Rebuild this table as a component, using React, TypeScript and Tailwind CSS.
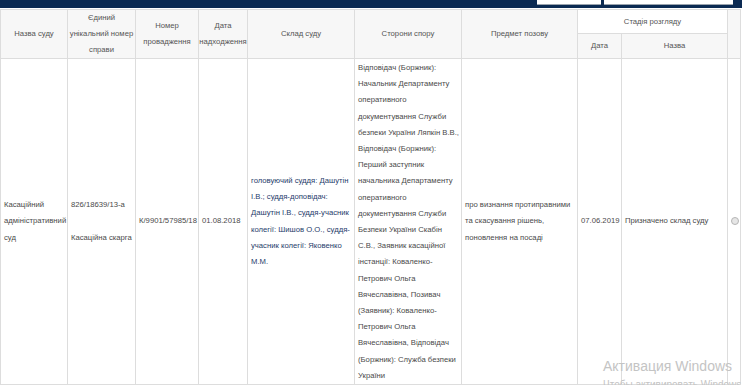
const headCell = "border border-[#dddddd] bg-[#f7f7f7] text-center align-middle font-normal px-0 py-0 leading-[16px] whitespace-nowrap";
const bodyCell = "border border-[#dddddd] align-middle px-[3px] py-0 text-left font-normal";

const parties = [
  "Відповідач (Боржник):",
  "Начальник Департаменту",
  "оперативного",
  "документування Служби",
  "безпеки України Ляпкін В.В.,",
  "Відповідач (Боржник):",
  "Перший заступник",
  "начальника Департаменту",
  "оперативного",
  "документування Служби",
  "Безпеки України Скабін",
  "С.В., Заявник касаційної",
  "інстанції: Коваленко-",
  "Петрович Ольга",
  "Вячеславівна, Позивач",
  "(Заявник): Коваленко-",
  "Петрович Ольга",
  "Вячеславівна, Відповідач",
  "(Боржник): Служба безпеки",
  "України",
];

const judges = [
  "головуючий суддя: Дашутін",
  "І.В.; суддя-доповідач:",
  "Дашутін І.В., суддя-учасник",
  "колегії: Шишов О.О., суддя-",
  "учасник колегії: Яковенко",
  "М.М.",
];

const Lines = ({ items }: { items: string[] }) => (
  <>
    {items.map((t, i) => (
      <span key={i} className="block whitespace-nowrap">
        {t}
      </span>
    ))}
  </>
);

const App = () => {
  return (
    <div className="relative w-[742px] h-[385px] overflow-hidden bg-white font-['Liberation_Sans',Arial,sans-serif] text-[7.7px] text-[#555555]">
      <div className="h-[8px] bg-[#0b2a52] flex justify-end items-start pr-[9px] gap-[3px]">
        <div className="w-[64px] h-[5px] bg-white border-b border-[#9aa3ad]" />
        <div className="w-[129px] h-[5px] bg-white border-b border-[#9aa3ad]" />
      </div>
      <div className="h-[1px] bg-white" />

      <table className="w-[740px] table-fixed border-collapse">
        <colgroup>
          <col className="w-[67px]" />
          <col className="w-[68px]" />
          <col className="w-[63px]" />
          <col className="w-[49px]" />
          <col className="w-[107px]" />
          <col className="w-[107px]" />
          <col className="w-[116px]" />
          <col className="w-[44px]" />
          <col className="w-[106px]" />
          <col className="w-[13px]" />
        </colgroup>
        <thead>
          <tr className="h-[24px]">
            <th rowSpan={2} className={headCell}>Назва суду</th>
            <th rowSpan={2} className={headCell}>
              Єдиний
              <br />
              унікальний номер
              <br />
              справи
            </th>
            <th rowSpan={2} className={headCell}>
              Номер
              <br />
              провадження
            </th>
            <th rowSpan={2} className={headCell}>
              Дата
              <br />
              надходження
            </th>
            <th rowSpan={2} className={headCell}>Склад суду</th>
            <th rowSpan={2} className={headCell}>Сторони спору</th>
            <th rowSpan={2} className={headCell}>Предмет позову</th>
            <th colSpan={2} className={`${headCell} !bg-white`}>Стадія розгляду</th>
            <th rowSpan={2} className={headCell}></th>
          </tr>
          <tr className="h-[25px]">
            <th className={headCell}>Дата</th>
            <th className={headCell}>Назва</th>
          </tr>
        </thead>
        <tbody className="leading-[16.2px] text-[#4a4a4a]">
          <tr>
            <td className={bodyCell}>
              Касаційний
              <br />
              адміністративний
              <br />
              суд
            </td>
            <td className={bodyCell}>
              826/18639/13-а
              <br />
              <br />
              Касаційна скарга
            </td>
            <td className={`${bodyCell} whitespace-nowrap`}>К/9901/57985/18</td>
            <td className={bodyCell}>01.08.2018</td>
            <td className={`${bodyCell} text-[#1f3d6b]`}>
              <Lines items={judges} />
            </td>
            <td className={`${bodyCell} pt-[1px]`}>
              <Lines items={parties} />
            </td>
            <td className={bodyCell}>
              <Lines
                items={[
                  "про визнання протиправними",
                  "та скасування рішень,",
                  "поновлення на посаді",
                ]}
              />
            </td>
            <td className={bodyCell}>07.06.2019</td>
            <td className={`${bodyCell} whitespace-nowrap`}>Призначено склад суду</td>
            <td className={`${bodyCell} text-center px-0`}>
              <span className="inline-block w-[8px] h-[8px] rounded-full border border-[#b5b5b5] bg-[#e6e6e6] align-middle" />
            </td>
          </tr>
        </tbody>
      </table>

      <div className="absolute left-[603px] top-[357px] text-[#c4c4c4] whitespace-nowrap pointer-events-none">
        <div className="text-[14px] leading-[18px]">Активация Windows</div>
        <div className="text-[10px] leading-[14px] pt-[3px]">Чтобы активировать Windows, перейдите в раздел</div>
      </div>
    </div>
  );
};

export default App;
